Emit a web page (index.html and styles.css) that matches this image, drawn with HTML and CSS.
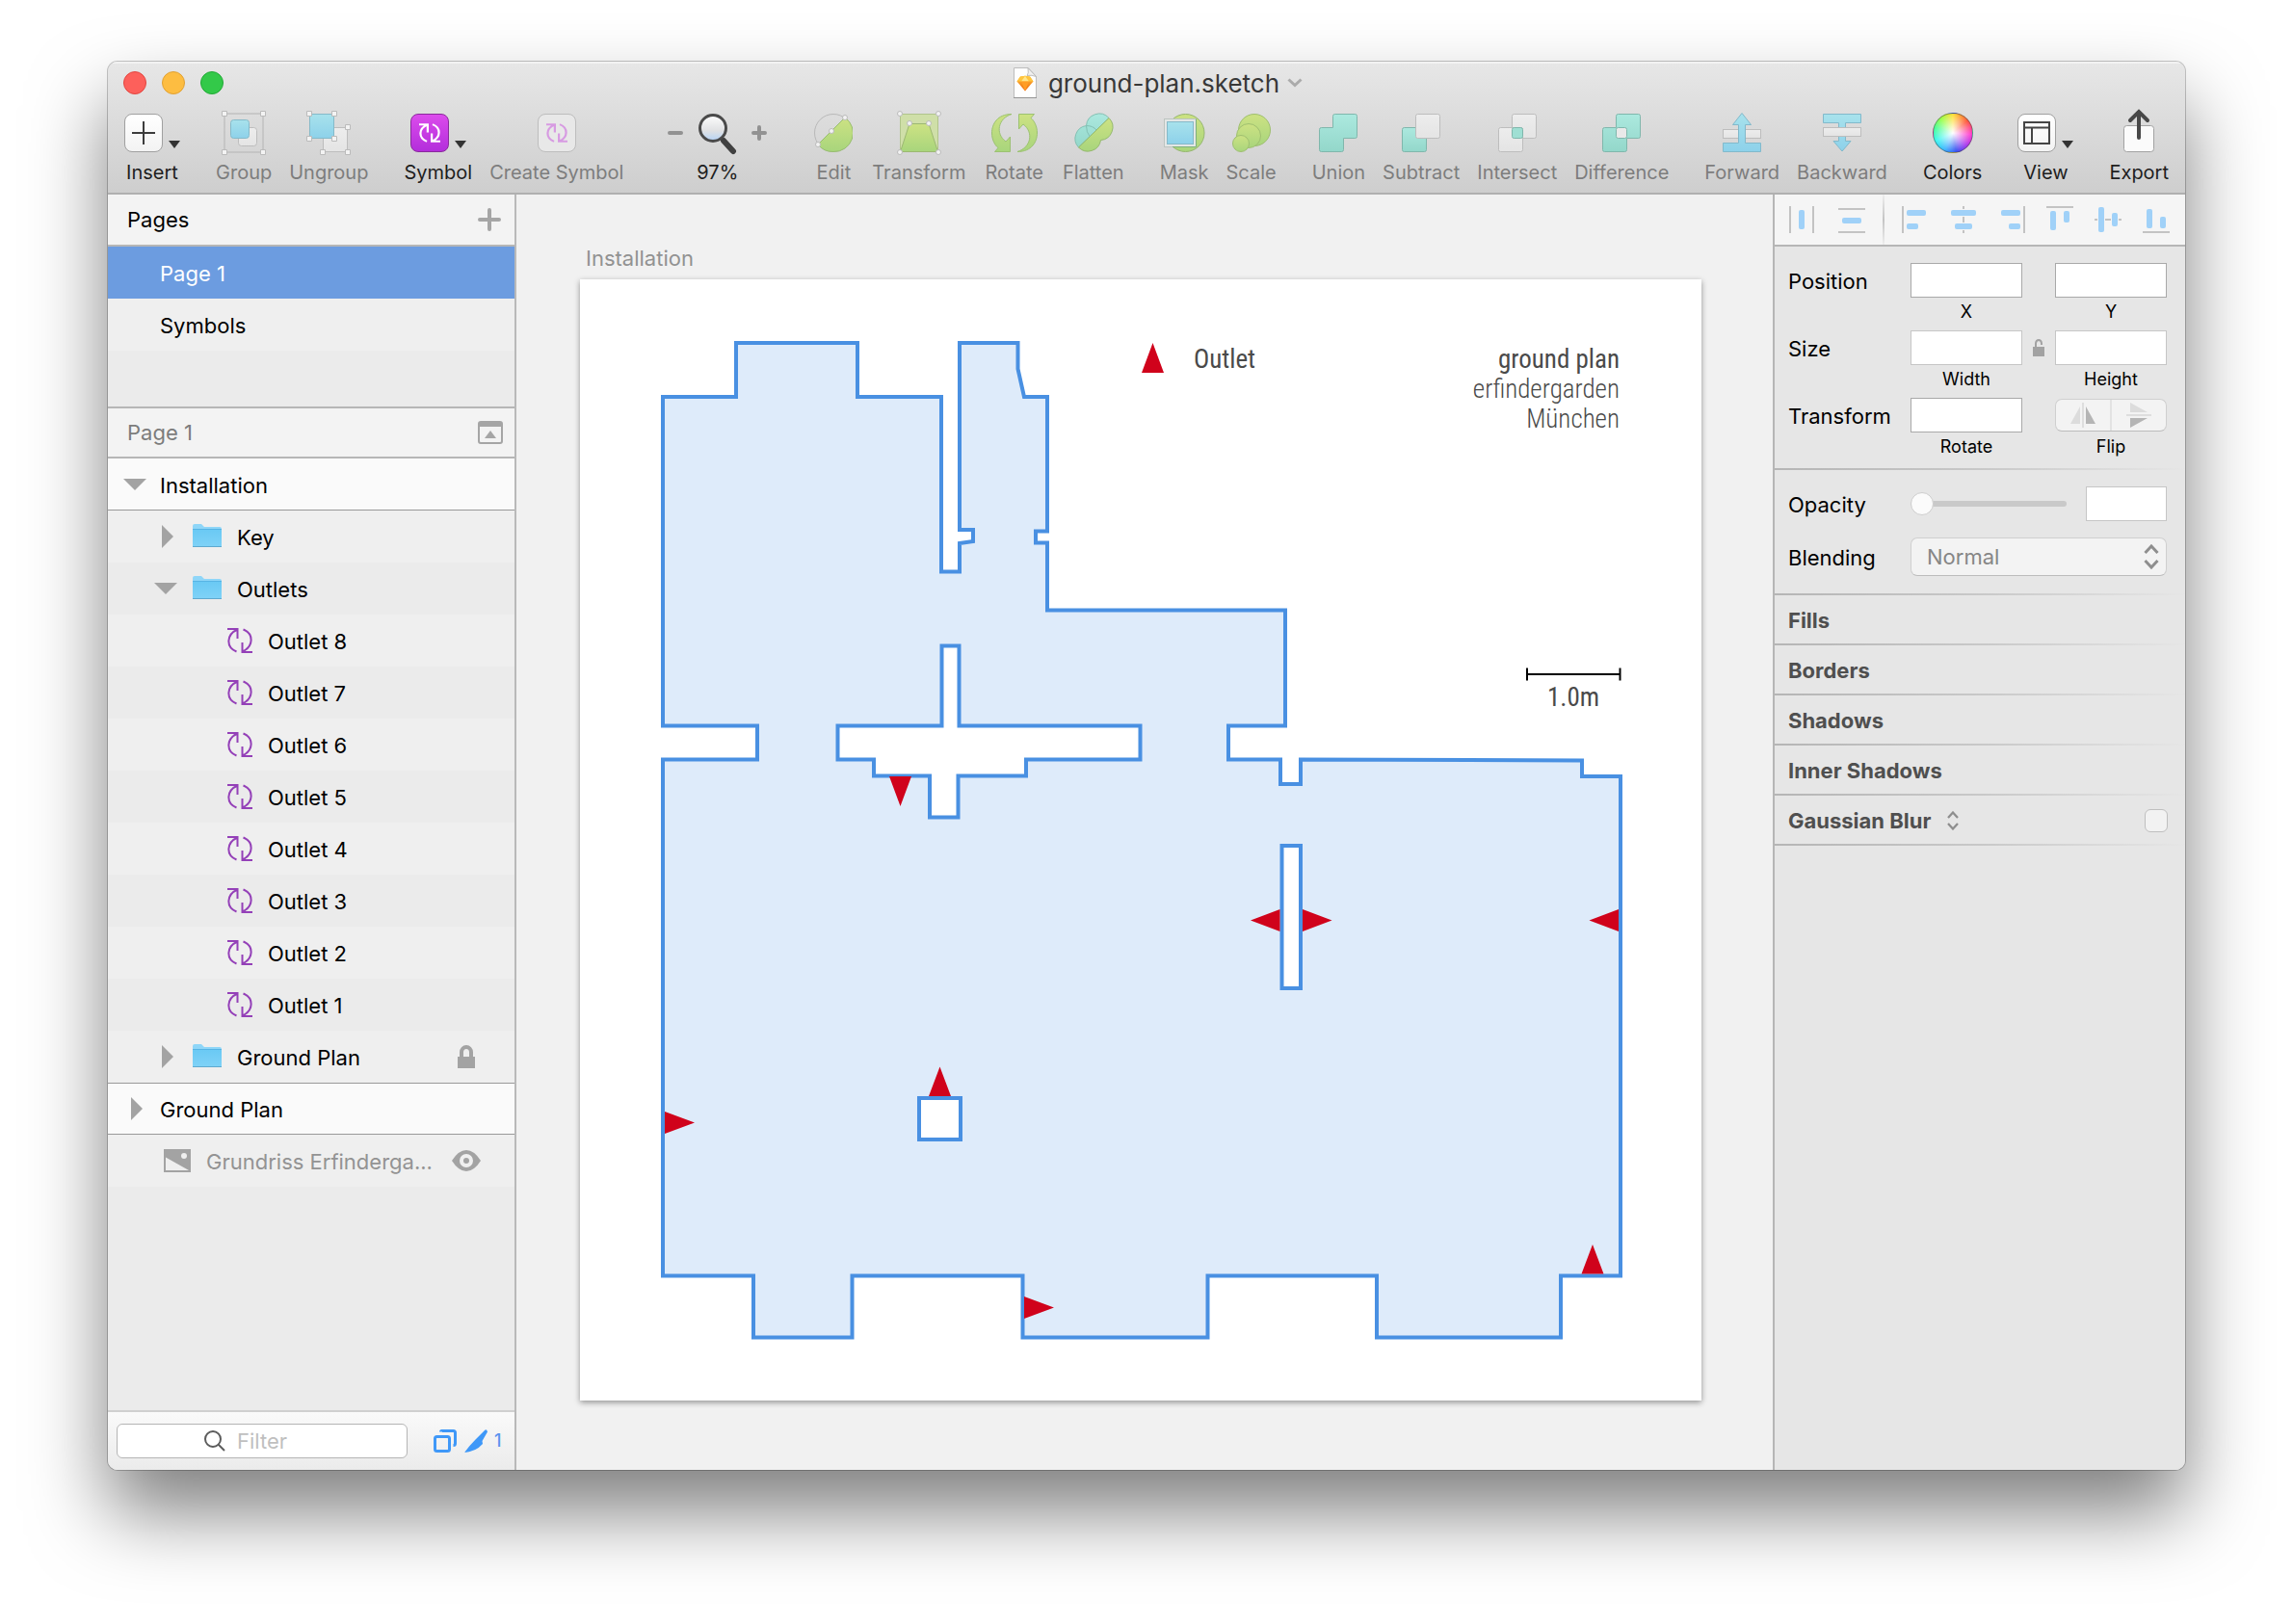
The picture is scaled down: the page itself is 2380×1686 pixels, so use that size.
FILE: index.html
```html
<!DOCTYPE html>
<html lang="en">
<head>
<meta charset="utf-8">
<title>ground-plan.sketch</title>
<link rel="stylesheet" href="styles.css">
</head>
<body>
<svg class="defs" width="0" height="0" aria-hidden="true">
  <defs>
    <linearGradient id="blue" x1="0" y1="0" x2="0" y2="1"><stop offset="0" stop-color="#a8e2ec"/><stop offset="1" stop-color="#8dd1ea"/></linearGradient>
    <linearGradient id="green" x1="0" y1="0" x2="0" y2="1"><stop offset="0" stop-color="#cde283"/><stop offset="1" stop-color="#a8d57c"/></linearGradient>
    <linearGradient id="teal" x1="0" y1="0" x2="0" y2="1"><stop offset="0" stop-color="#ace9df"/><stop offset="1" stop-color="#93d7ca"/></linearGradient>
    <linearGradient id="pale" x1="0" y1="0" x2="0" y2="1"><stop offset="0" stop-color="#ededed"/><stop offset="1" stop-color="#e4e4e4"/></linearGradient>
    <linearGradient id="glass" x1="0" y1="0" x2="0" y2="1"><stop offset="0" stop-color="#fdfdfd"/><stop offset=".6" stop-color="#e0e1e3"/><stop offset="1" stop-color="#b4d2f6"/></linearGradient>
    <linearGradient id="gem" x1="0" y1="0" x2="0" y2="1"><stop offset="0" stop-color="#fdc23a"/><stop offset="1" stop-color="#f0660c"/></linearGradient>
    <linearGradient id="folderfill" x1="0" y1="0" x2="0" y2="1"><stop offset="0" stop-color="#69c9f4"/><stop offset="1" stop-color="#7fd2f7"/></linearGradient>
    <symbol id="cycle" viewBox="0 0 26 26"><path d="M0 1h10.5v10M10.5 1.500C-1.500 7-1.500 20 9.500 24.500M26 25H15.500V15M15.500 24.500C27.500 19 27.500 6 16.500 1.500" fill="none" stroke="currentColor" stroke-width="2"/></symbol>
    <symbol id="folder" viewBox="0 0 30 26"><path d="M0 24V2q0-2 2-2h7l3 3h16q2 0 2 2v19z" fill="#8fd6f8"/><path d="M0 5h30v18.500H0z" fill="url(#folderfill)"/><path d="M0 5.500h30" stroke="#58b4e4"/><path d="M0 23.500h30" stroke="#5fa9cf"/></symbol>
    <symbol id="down" viewBox="0 0 24 24"><path d="M0 6h24L12 18z" fill="#a3a3a3"/></symbol>
    <symbol id="right" viewBox="0 0 24 24"><path d="M8 0v24l12-12z" fill="#a3a3a3"/></symbol>
    <symbol id="updown" viewBox="0 0 16 26"><path d="M1.500 9L8 2l6.500 7M1.500 17L8 24l6.500-7" fill="none" stroke="#8e8e8e" stroke-width="3"/></symbol>
  </defs>
</svg>

<div class="window">
  <header class="chrome">
    <div class="titlebar">
      <div class="lights">
        <button class="light close" aria-label="Close"></button>
        <button class="light minimize" aria-label="Minimize"></button>
        <button class="light zoom-window" aria-label="Zoom window"></button>
      </div>
      <h1 class="title">
        <svg width="24" height="32" viewBox="0 0 24 32" aria-hidden="true"><path d="M.5.5H15l8.500 9v22H.5z" fill="#fefefe" stroke="#bcbcbc"/><path d="M15 .5q1 6-1 8 5-1 9.500 1z" fill="#f0f0f0" stroke="#b0b0b0" stroke-width=".8"/><path d="M0 31.500h24" stroke="#949494"/><path d="M7 9.500l5-.7 5 .7 3.500 5L12 24.500l-8.500-10z" fill="url(#gem)"/><path d="M3.500 14.500h17L17 9.500l-5-.7-5 .7z" fill="#ffc53d"/><path d="M8 14.500l4-5.500 4 5.500z" fill="#ffe58a"/><path d="M8 14.500h8l-4 10z" fill="#ff9d25"/></svg>
        <span>ground-plan.sketch</span>
      </h1>
      <button class="title-menu" aria-label="Document menu"><svg width="16" height="10" viewBox="0 0 16 10"><path d="M1.500 1.500L8 7.500l6.500-6" fill="none" stroke="#ababab" stroke-width="3"/></svg></button>
    </div>

    <div class="toolbar" role="toolbar" aria-label="Tools">
      <div class="tools">
        <button class="tool">
          <span class="glyph"><span class="tile"><svg width="24" height="24" viewBox="0 0 24 24"><path d="M0 12h24M12 0v24" stroke="#3c3c3c" stroke-width="2"/></svg></span><span class="caret"></span></span>
          <span class="name">Insert</span>
        </button>
      </div>
      <div class="tools">
        <button class="tool off">
          <svg class="icon" viewBox="0 0 48 52"><rect x="4" y="6" width="40" height="40" fill="none" stroke="#b4b4b4"/><rect x="18.500" y="20.500" width="19" height="19" rx="3" fill="url(#pale)" stroke="#bdbdbd"/><rect x="10.500" y="12.500" width="19" height="19" rx="3" fill="url(#blue)" stroke="#85bac9"/><g fill="#f3f3f3" stroke="#bbb"><path d="M1.500 3.500h5v5h-5zM41.500 3.500h5v5h-5zM1.500 43.500h5v5h-5zM41.500 43.500h5v5h-5z"/></g></svg>
          <span class="name">Group</span>
        </button>
        <button class="tool off">
          <svg class="icon" viewBox="0 0 48 52"><rect x="18.500" y="20.500" width="25" height="25" fill="url(#pale)" stroke="#bdbdbd"/><rect x="4.500" y="6.500" width="25" height="25" fill="url(#blue)" stroke="#85bac9"/><g fill="#f3f3f3" stroke="#bbb"><path d="M1.500 3.500h5v5h-5zM27.500 3.500h5v5h-5zM1.500 29.500h5v5h-5zM27.500 29.500h5v5h-5zM41.500 17.500h5v5h-5zM15.500 43.500h5v5h-5zM41.500 43.500h5v5h-5z"/></g></svg>
          <span class="name">Ungroup</span>
        </button>
      </div>
      <div class="tools">
        <button class="tool">
          <span class="glyph"><span class="tile purple"><svg width="22" height="20" viewBox="0 0 26 26" preserveAspectRatio="none"><path d="M0 1.500h10.500v11M10 2C-1 7-1 20 9.500 24.500M26 24.500H15.500v-11M16 24C27 19 27 6 16.500 1.500" fill="none" stroke="#fff" stroke-width="2.600"/></svg></span><span class="caret"></span></span>
          <span class="name">Symbol</span>
        </button>
        <button class="tool off">
          <span class="glyph"><span class="tile faded"><svg width="22" height="20" viewBox="0 0 26 26" preserveAspectRatio="none"><path d="M0 1.500h10.500v11M10 2C-1 7-1 20 9.500 24.500M26 24.500H15.500v-11M16 24C27 19 27 6 16.500 1.500" fill="none" stroke="#d79be2" stroke-width="2.600"/></svg></span></span>
          <span class="name">Create Symbol</span>
        </button>
      </div>
      <div class="tools zoomer">
        <button class="step" aria-label="Zoom out"><svg width="16" height="16" viewBox="0 0 16 16"><path d="M2 8h12" stroke="#929292" stroke-width="4" stroke-linecap="round"/></svg></button>
        <button class="tool">
          <svg class="icon slim" viewBox="0 0 40 52"><path d="M26 34l10 11" stroke="#404040" stroke-width="6" stroke-linecap="round"/><circle cx="15" cy="21" r="13.500" fill="url(#glass)" stroke="#4a4a4a" stroke-width="3"/></svg>
          <span class="name">97%</span>
        </button>
        <button class="step" aria-label="Zoom in"><svg width="16" height="16" viewBox="0 0 16 16"><path d="M2 8h12M8 2v12" stroke="#929292" stroke-width="4" stroke-linecap="round"/></svg></button>
      </div>
      <div class="tools shaping">
        <button class="tool off">
          <svg class="icon slim" viewBox="4 0 40 52"><circle cx="24" cy="26" r="19.500" fill="none" stroke="#b8b8b8"/><path d="M8 38L36 10A19.500 19.500 0 0 1 24 45.500 19.500 19.500 0 0 1 8 38z" fill="url(#green)" stroke="#98bd70"/><g fill="#f3f3f3" stroke="#bbb"><circle cx="8" cy="38" r="2.500"/><circle cx="22" cy="24" r="2.500"/><circle cx="36" cy="10" r="2.500"/></g></svg>
          <span class="name">Edit</span>
        </button>
        <button class="tool off">
          <svg class="icon" viewBox="0 0 48 52"><rect x="4.500" y="6.500" width="39" height="39" fill="#cfdfa8" stroke="#b1c58c"/><path d="M14 16.500h20l9.500 29h-39z" fill="url(#green)" stroke="#9cb872"/><g fill="#f3f3f3" stroke="#bbb"><circle cx="4" cy="6" r="2.500"/><circle cx="44" cy="6" r="2.500"/><circle cx="4" cy="46" r="2.500"/><circle cx="44" cy="46" r="2.500"/><circle cx="14" cy="16" r="2.500"/><circle cx="34" cy="16" r="2.500"/></g></svg>
          <span class="name">Transform</span>
        </button>
        <button class="tool off">
          <svg class="icon" viewBox="0 0 48 52"><path d="M21 6.500C6 6.500.5 17 .5 26c0 7 3 12.500 6.500 15.500l-3.500 4h16V30l-4.500 5C4 27 6.500 11 21 6.500z" fill="url(#green)" stroke="#9cc172"/><path d="M27 45.500C42 45.500 47.500 35 47.500 26c0-7-3-12.500-6.500-15.500l3.500-4h-16V22l4.500-5c11 8 8.500 24-6 28.500z" fill="url(#green)" stroke="#9cc172"/></svg>
          <span class="name">Rotate</span>
        </button>
        <button class="tool off">
          <svg class="icon" viewBox="0 0 48 52"><path d="M8.500 41A13.500 13.500 0 0 1 16.500 18.500 13.500 13.500 0 0 1 40 10.500z" fill="url(#teal)" stroke="#83c0b3"/><path d="M8.500 41L40 10.500A13.500 13.500 0 0 1 31.500 33.500 13.500 13.500 0 0 1 8.500 41z" fill="url(#green)" stroke="#95b96e"/><path d="M16.500 18.500q0 7 3.500 11M16.500 18.500q7 0 10.500 4.500" fill="none" stroke="#83c0b3"/></svg>
          <span class="name">Flatten</span>
        </button>
      </div>
      <div class="tools">
        <button class="tool off">
          <svg class="icon" viewBox="0 0 48 52"><circle cx="25.500" cy="26" r="19.500" fill="url(#green)" stroke="#96b670"/><rect x="3.500" y="11.500" width="33" height="29" fill="#e4e7e6" stroke="#bcc4c0"/><path d="M36.500 11.500v29H12" fill="none" stroke="#7fb07f"/><rect x="6.500" y="14.500" width="27" height="23" fill="url(#blue)" stroke="#86b9c9"/></svg>
          <span class="name">Mask</span>
        </button>
        <button class="tool off">
          <svg class="icon" viewBox="0 0 48 52"><g fill="url(#green)" stroke="#9fbf70"><circle cx="27" cy="23" r="16.500"/><circle cx="21" cy="29" r="12.500"/><circle cx="13" cy="37" r="8.500"/></g></svg>
          <span class="name">Scale</span>
        </button>
      </div>
      <div class="tools">
        <button class="tool off">
          <svg class="icon" viewBox="0 0 48 52"><path d="M20.500 6.500h21q2 0 2 2v21q0 2-2 2h-12v12q0 2-2 2h-21q-2 0-2-2v-21q0-2 2-2h12v-12q0-2 2-2z" fill="url(#teal)" stroke="#80b7ac"/></svg>
          <span class="name">Union</span>
        </button>
        <button class="tool off">
          <svg class="icon" viewBox="0 0 48 52"><rect x="4.500" y="20.500" width="25" height="25" rx="2" fill="url(#teal)" stroke="#80b7ac"/><rect x="18.500" y="6.500" width="25" height="25" rx="2" fill="url(#pale)" stroke="#bdbdbd"/></svg>
          <span class="name">Subtract</span>
        </button>
        <button class="tool off">
          <svg class="icon" viewBox="0 0 48 52"><rect x="18.500" y="6.500" width="25" height="25" rx="2" fill="url(#pale)" stroke="#bdbdbd"/><rect x="4.500" y="20.500" width="25" height="25" rx="2" fill="url(#pale)" stroke="#bdbdbd"/><rect x="18.500" y="20.500" width="11" height="11" rx="2" fill="#9fdfd3" stroke="#80b7ac"/></svg>
          <span class="name">Intersect</span>
        </button>
        <button class="tool off">
          <svg class="icon" viewBox="0 0 48 52"><path d="M20.500 6.500h21q2 0 2 2v21q0 2-2 2h-12v12q0 2-2 2h-21q-2 0-2-2v-21q0-2 2-2h12v-12q0-2 2-2z" fill="url(#teal)" stroke="#80b7ac"/><rect x="18.500" y="20.500" width="11" height="11" rx="2" fill="#e9e9e9" stroke="#80b7ac"/></svg>
          <span class="name">Difference</span>
        </button>
      </div>
      <div class="tools">
        <button class="tool off">
          <svg class="icon" viewBox="0 0 48 52"><rect x="4.500" y="22.500" width="39" height="9" fill="url(#pale)" stroke="#bdbdbd"/><path d="M24 5.500l9.500 12h-6v19h16v9h-39v-9h16v-19h-6z" fill="url(#blue)" stroke="#82b9cb"/></svg>
          <span class="name">Forward</span>
        </button>
        <button class="tool off">
          <svg class="icon" viewBox="0 0 48 52"><path d="M4.500 6.500h39v9h-16v19h5.500L24 45l-9-10.500h5.500v-19h-16z" fill="url(#blue)" stroke="#82b9cb"/><rect x="4.500" y="20.500" width="39" height="9" fill="url(#pale)" stroke="#bdbdbd"/></svg>
          <span class="name">Backward</span>
        </button>
      </div>
      <div class="tools">
        <button class="tool">
          <span class="glyph"><span class="wheel"></span></span>
          <span class="name">Colors</span>
        </button>
      </div>
      <div class="tools">
        <button class="tool">
          <span class="glyph"><span class="tile"><svg width="28" height="24" viewBox="0 0 28 24"><path d="M1 1h26v22H1zM1 6.500h26M9 6.500V23" fill="none" stroke="#454545" stroke-width="2"/></svg></span><span class="caret"></span></span>
          <span class="name">View</span>
        </button>
      </div>
      <div class="tools">
        <button class="tool">
          <svg class="icon" viewBox="0 0 48 52"><rect x="8.500" y="18.500" width="31" height="27" rx="3" fill="#fbfbfb" stroke="#a2a2a2"/><path d="M24 31V5M15 13l9-9 9 9" fill="none" stroke="#484848" stroke-width="4" stroke-linecap="round"/></svg>
          <span class="name">Export</span>
        </button>
      </div>
    </div>
  </header>

  <div class="body">
    <aside class="layers">
      <div class="bar">
        <h2>Pages</h2>
        <button class="plain" aria-label="Add page"><svg width="24" height="24" viewBox="0 0 24 24"><path d="M2 12h20M12 2v20" stroke="#a5a5a5" stroke-width="4" stroke-linecap="round"/></svg></button>
      </div>
      <ul class="pages">
        <li class="row page selected"><span class="label">Page 1</span></li>
        <li class="row page"><span class="label">Symbols</span></li>
      </ul>
      <div class="bar current">
        <h2>Page 1</h2>
        <button class="plain" aria-label="Collapse layers"><svg width="26" height="24" viewBox="0 0 26 24"><rect x="1" y="1" width="24" height="22" rx="2" fill="none" stroke="#a5a5a5" stroke-width="2"/><path d="M1 1h24v5H1zM7 18l6-8 6 8z" fill="#a5a5a5"/></svg></button>
      </div>
      <ul class="tree">
        <li class="row artboard-row"><svg class="twisty"><use href="#down"/></svg><span class="label">Installation</span></li>
        <li class="row level1"><svg class="twisty"><use href="#right"/></svg><svg class="folder"><use href="#folder"/></svg><span class="label">Key</span></li>
        <li class="row level1"><svg class="twisty"><use href="#down"/></svg><svg class="folder"><use href="#folder"/></svg><span class="label">Outlets</span></li>
        <li class="row level2"><svg class="cycle"><use href="#cycle"/></svg><span class="label">Outlet 8</span></li>
        <li class="row level2"><svg class="cycle"><use href="#cycle"/></svg><span class="label">Outlet 7</span></li>
        <li class="row level2"><svg class="cycle"><use href="#cycle"/></svg><span class="label">Outlet 6</span></li>
        <li class="row level2"><svg class="cycle"><use href="#cycle"/></svg><span class="label">Outlet 5</span></li>
        <li class="row level2"><svg class="cycle"><use href="#cycle"/></svg><span class="label">Outlet 4</span></li>
        <li class="row level2"><svg class="cycle"><use href="#cycle"/></svg><span class="label">Outlet 3</span></li>
        <li class="row level2"><svg class="cycle"><use href="#cycle"/></svg><span class="label">Outlet 2</span></li>
        <li class="row level2"><svg class="cycle"><use href="#cycle"/></svg><span class="label">Outlet 1</span></li>
        <li class="row level1"><svg class="twisty"><use href="#right"/></svg><svg class="folder"><use href="#folder"/></svg><span class="label">Ground Plan</span><svg class="state" viewBox="0 0 30 24"><path d="M10 12V7.500a5 5.500 0 0 1 10 0V12" fill="none" stroke="#a3a3a3" stroke-width="4"/><path d="M6 12h18v12H6z" fill="#a3a3a3"/></svg></li>
        <li class="row artboard-row ruled"><svg class="twisty"><use href="#right"/></svg><span class="label">Ground Plan</span></li>
        <li class="row image-row"><svg class="picture" viewBox="0 0 28 24"><path d="M0 0h28v24H0zM2 8.500V22h24z" fill="#a3a3a3" fill-rule="evenodd"/><circle cx="21" cy="7" r="3" fill="#efefef"/></svg><span class="label">Grundriss Erfinderga...</span><svg class="state" viewBox="0 0 30 24"><path d="M0 12Q7 1 15 1t15 11q-7 11-15 11T0 12z" fill="#a3a3a3"/><circle cx="15" cy="12" r="5" fill="#a3a3a3" stroke="#f0f0f0" stroke-width="4"/></svg></li>
      </ul>
      <footer class="filterbar">
        <label class="filter">
          <svg width="22" height="22" viewBox="0 0 22 22"><circle cx="9" cy="9" r="8" fill="none" stroke="#5c5c5c" stroke-width="2"/><path d="M14.500 14.500L21 21" stroke="#5c5c5c" stroke-width="2"/></svg>
          <input type="text" placeholder="Filter" aria-label="Filter layers">
        </label>
        <button class="plain" aria-label="Show only copies"><svg width="24" height="24" viewBox="0 0 24 24"><rect x="1.500" y="7.500" width="15" height="15" rx="2" fill="none" stroke="#3f98f8" stroke-width="3"/><path d="M7.500 2.500q0-1 1-1h12q2 0 2 2v11q0 2-2 2" fill="none" stroke="#3f98f8" stroke-width="3"/></svg></button>
        <button class="plain slices"><svg width="24" height="24" viewBox="0 0 24 24"><path d="M21 1Q23-1 24 2.500L18.500 12l.5 3Q12 23 0 24q5-7 12-14z" fill="#3f98f8"/></svg>1</button>
      </footer>
    </aside>

    <main class="canvas">
      <h2 class="artboard-name">Installation</h2>
      <svg class="artboard" viewBox="602 290 1164 1164" role="img" aria-label="Ground plan of erfindergarden">
        <path class="plan" fill-rule="evenodd" d="M688 412H764V356H890V412H977V593.500H996V564L1010 562V550H996V356H1056.500V383L1063 412H1087V551.500H1075V563.500H1087V633.500H1334V753.500H1275V788.500H1329V814H1350V788.500L1642 789.500V806H1682V1324.500H1620V1388.500H1429V1324.500H1253.500V1388.500H1061.500V1324.500H884.500V1388.500H782V1324.500H688V788.500H786V753.500H688Z
          M869.500 753.500H977.500V670.500H995.500V753.500H1183.500V788.500H1065V805.500H994.500V848.500H965V805.500H907V788.500H869.500Z
          M1330.500 878H1350V1026H1330.500Z
          M954 1140H997V1183H954Z"/>
        <path class="outlet" d="M1196.500 356l11.500 31h-23zM934.500 837L923 806h23zM721 1165.500L690 1154v23zM975.500 1107.500L987 1138h-23zM1094 1357.500L1063 1346v23zM1653 1292l11.500 30.500h-23zM1298 955.500l30.500-11.500v23zM1382.500 955.500L1352 944v23zM1649.500 955.500l30.500-11.500v23z"/>
        <path class="scale-bar" d="M1585 700h96.500M1585 693.500v13M1681.500 693.500v13"/>
        <text class="note" x="1239" y="382">Outlet</text>
        <text class="note end" x="1681" y="382">ground plan</text>
        <text class="note thin end" x="1681" y="413">erfindergarden</text>
        <text class="note thin end" x="1681" y="444">München</text>
        <text class="note mid" x="1633" y="733">1.0m</text>
      </svg>
    </main>

    <aside class="inspector">
      <div class="align">
        <div class="distribute">
          <button class="plain" aria-label="Distribute horizontally"><svg width="28" height="28"><path class="guide" d="M2 0v28M26 0v28"/><rect x="11" y="4" width="6" height="20" rx="2"/></svg></button>
          <button class="plain" aria-label="Distribute vertically"><svg width="28" height="28"><path class="guide" d="M0 3h28M0 27h28"/><rect x="4" y="12" width="20" height="6" rx="2"/></svg></button>
        </div>
        <span class="split"></span>
        <div class="edges">
          <button class="plain" aria-label="Align left"><svg width="28" height="28"><path class="guide" d="M1 0v28"/><rect x="5" y="4" width="20" height="6" rx="2"/><rect x="5" y="18" width="12" height="6" rx="2"/></svg></button>
          <button class="plain" aria-label="Align center"><svg width="28" height="28"><path class="guide" d="M14 0v3M14 11v6M14 25v3"/><rect x="1" y="4" width="26" height="6" rx="2"/><rect x="5" y="18" width="18" height="6" rx="2"/></svg></button>
          <button class="plain" aria-label="Align right"><svg width="28" height="28"><path class="guide" d="M27 0v28"/><rect x="3" y="4" width="20" height="6" rx="2"/><rect x="11" y="18" width="12" height="6" rx="2"/></svg></button>
          <button class="plain" aria-label="Align top"><svg width="28" height="28"><path class="guide" d="M0 1h28"/><rect x="4" y="5" width="6" height="20" rx="2"/><rect x="18" y="5" width="6" height="12" rx="2"/></svg></button>
          <button class="plain" aria-label="Align middle"><svg width="28" height="28"><path class="guide" d="M0 14h3M11 14h6M25 14h3"/><rect x="4" y="1" width="6" height="26" rx="2"/><rect x="18" y="7" width="6" height="14" rx="2"/></svg></button>
          <button class="plain" aria-label="Align bottom"><svg width="28" height="28"><path class="guide" d="M0 27h28"/><rect x="4" y="3" width="6" height="20" rx="2"/><rect x="18" y="11" width="6" height="12" rx="2"/></svg></button>
        </div>
      </div>

      <section class="geometry">
        <span class="heading">Position</span>
        <input class="field a" id="x" type="text">
        <input class="field b" id="y" type="text">
        <label class="caption a" for="x">X</label>
        <label class="caption b" for="y">Y</label>

        <span class="heading">Size</span>
        <input class="field soft a" id="w" type="text">
        <button class="plain lock" aria-label="Lock proportions"><svg width="12" height="18" viewBox="0 0 12 18"><path d="M3 8V4.500a3 3.500 0 0 1 6 0V6" fill="none" stroke="#a2a2a2" stroke-width="2"/><path d="M0 8h12v10H0z" fill="#a2a2a2"/></svg></button>
        <input class="field soft b" id="h" type="text">
        <label class="caption a" for="w">Width</label>
        <label class="caption b" for="h">Height</label>

        <span class="heading">Transform</span>
        <input class="field a" id="r" type="text">
        <div class="flip b" role="group" aria-labelledby="flip">
          <button class="plain" aria-label="Flip horizontal"><svg width="26" height="26" viewBox="0 0 26 26"><path d="M10 4v18H0z" fill="#dcdcdc"/><path d="M16 4v18h10z" fill="#b5b5b5"/><path d="M13 0v26" stroke="#dedede" stroke-width="2"/></svg></button>
          <button class="plain" aria-label="Flip vertical"><svg width="26" height="26" viewBox="0 0 26 26"><path d="M4 0v10h18z" fill="#dcdcdc"/><path d="M4 26V16h18z" fill="#b5b5b5"/><path d="M0 13h26" stroke="#dedede" stroke-width="2"/></svg></button>
        </div>
        <label class="caption a" for="r">Rotate</label>
        <span class="caption b" id="flip">Flip</span>
      </section>

      <section class="style">
        <label class="heading" for="opacity">Opacity</label>
        <input class="slider" id="opacity" type="range" min="0" max="100" value="0">
        <input class="field soft percent" type="text" aria-label="Opacity value">
        <label class="heading" for="blending">Blending</label>
        <div class="dropdown">
          <select id="blending"><option>Normal</option></select>
          <svg class="arrows" width="16" height="26"><use href="#updown"/></svg>
        </div>
      </section>

      <button class="section">Fills</button>
      <button class="section">Borders</button>
      <button class="section">Shadows</button>
      <button class="section">Inner Shadows</button>
      <div class="section">
        <label for="blur">Gaussian Blur</label>
        <svg class="mini" width="12" height="20"><use href="#updown"/></svg>
        <input class="check" id="blur" type="checkbox">
      </div>
    </aside>
  </div>
</div>
</body>
</html>
```
FILE: styles.css
```css
* { box-sizing: border-box; }

body {
  margin: 0;
  min-height: 100vh;
  padding: 64px 112px 160px;
  display: flex;
  background: #fff;
  color: #000;
  font: 22px/28px Inter, "Liberation Sans", sans-serif;
}

h1, h2, ul { margin: 0; padding: 0; font: inherit; list-style: none; }
svg { display: block; flex: none; }
.defs { position: absolute; }

button, input, select {
  margin: 0;
  padding: 0;
  border: 0;
  background: none;
  color: inherit;
  font: inherit;
}

.window {
  flex: 1;
  min-width: 0;
  display: flex;
  flex-direction: column;
  overflow: hidden;
  border-radius: 10px;
  background: #ebebeb;
  box-shadow: 0 0 0 1px rgba(0, 0, 0, .22), 0 44px 80px rgba(0, 0, 0, .5);
}

/* Title bar and toolbar */
.chrome {
  flex: none;
  height: 138px;
  border-bottom: 2px solid #b0b0b0;
  background: linear-gradient(#e7e7e7, #cecece);
  box-shadow: inset 0 2px #f2f2f2;
}

.titlebar {
  display: grid;
  grid-template-columns: 1fr auto 1fr;
  align-items: center;
  height: 44px;
  padding: 0 16px;
}

.lights { display: flex; gap: 16px; }
.light { width: 24px; height: 24px; border-radius: 50%; border: 1px solid #e2453f; background: #fd605b; }
.minimize { border-color: #e0a033; background: #fdbd41; }
.zoom-window { border-color: #22a936; background: #33c949; }

.title { display: flex; align-items: center; gap: 12px; color: #383838; font-size: 26px; }
.title span { padding-top: 2px; }
.title-menu { padding-left: 8px; justify-self: start; }

.toolbar {
  display: flex;
  justify-content: space-between;
  padding: 4px 17px 0;
}

.tools { display: flex; gap: 18px; }
.tools.shaping { gap: 20px; }

.tool {
  display: flex;
  flex-direction: column;
  align-items: center;
  color: #1e1e1e;
  font-size: 20px;
  line-height: 30px;
  white-space: nowrap;
}

.tool.off { color: #7d7d7d; }
.icon { width: 48px; height: 52px; }
.icon.slim { width: 40px; }
.glyph { display: flex; align-items: center; gap: 6px; height: 52px; }

.tile {
  display: grid;
  place-items: center;
  width: 40px;
  height: 40px;
  border: 1px solid #a0a0a0;
  border-radius: 8px;
  background: linear-gradient(#fff, #f3f3f3);
}

.tile.purple { border-color: #8a2a9c; background: linear-gradient(#dc4cec, #b32edb); }
.tile.faded { border-color: #bdbdbd; background: #e8e8e8; }

.caret {
  margin-top: 24px;
  border: 6px solid transparent;
  border-top: 8px solid #333;
  border-bottom: 0;
}

.wheel {
  width: 42px;
  height: 42px;
  border: 1px solid rgba(60, 60, 60, .5);
  border-radius: 50%;
  background:
    radial-gradient(circle, #fff, rgba(255, 255, 255, 0) 68%),
    conic-gradient(#ffe03a, #ff5a3c 50deg, #ff3fd0 95deg, #a23cf0 135deg, #3a55f0 170deg, #3fb4ff 205deg, #3ff5f0 245deg, #4dff9a 285deg, #9aff4a 320deg, #ffe03a);
}

.zoomer { gap: 14px; padding: 0 12px 0 9px; }
.step { height: 52px; }

/* Columns */
.body { flex: 1; display: flex; min-height: 0; }

.layers {
  flex: none;
  width: 424px;
  display: flex;
  flex-direction: column;
  border-right: 2px solid #b9b9b9;
}

.bar {
  display: flex;
  align-items: center;
  justify-content: space-between;
  height: 54px;
  padding: 0 14px 0 20px;
  border-bottom: 2px solid #b6b6b6;
  background: #f3f3f3;
}

.bar.current { height: 52px; padding-right: 12px; color: #7c7c7c; }
.pages { height: 168px; border-bottom: 2px solid #b6b6b6; }

.row { display: flex; align-items: center; gap: 16px; height: 54px; padding-right: 35px; }
.row:nth-child(even) { background: #efefef; }
.row.page { padding-left: 54px; }
.row.selected { background: #6c9ce0; color: #fff; }

.tree { flex: 1; }
.row.artboard-row { gap: 14px; padding-left: 16px; border-bottom: 1px solid #999; background: #fafafa; }
.row.ruled { border-top: 1px solid #999; }
.level1 { padding-left: 48px; }
.level2 { padding-left: 124px; }
.image-row { padding-left: 58px; color: #939393; }
.label { flex: 1; min-width: 0; padding-top: 2px; white-space: nowrap; }
.twisty { width: 24px; height: 24px; }
.folder { width: 30px; height: 26px; }
.cycle { width: 26px; height: 26px; color: #9440b8; }
.picture { width: 28px; height: 24px; }
.state { width: 30px; height: 24px; }

.filterbar {
  display: flex;
  align-items: center;
  height: 62px;
  padding: 0 14px 0 9px;
  border-top: 2px solid #d0d0d0;
  background: linear-gradient(#fafafa, #ebebeb);
}

.filter {
  display: flex;
  align-items: center;
  gap: 12px;
  width: 302px;
  height: 36px;
  margin-right: 27px;
  padding-left: 90px;
  border: 1px solid #b5b5b5;
  border-radius: 6px;
  background: #fff;
}

.filter input { flex: 1; min-width: 0; }
.filter input::placeholder { color: #bfbfbf; }
.slices { display: flex; align-items: center; gap: 7px; margin-left: 8px; color: #5b93ee; font-size: 18px; font-weight: 500; }

.canvas { flex: 1; min-width: 0; padding: 52px 74px 0 66px; background: #f1f1f1; }
.artboard-name { margin-bottom: 8px; padding-left: 6px; color: #929292; }
.artboard { width: 100%; height: auto; background: #fff; box-shadow: 0 2px 6px rgba(0, 0, 0, .4); }
.plan { fill: #deebfa; stroke: #4990e2; stroke-width: 4; }
.outlet { fill: #d0021b; }
.scale-bar { fill: none; stroke: #000; stroke-width: 2; }
.note { fill: #4a4a4a; font-family: "Roboto Condensed", Roboto, sans-serif; font-size: 27px; }
.thin { font-weight: 300; }
.end { text-anchor: end; }
.mid { text-anchor: middle; }

/* Inspector */
.inspector {
  flex: none;
  width: 428px;
  border-left: 2px solid #b6b6b6;
  background: #e6e6e6;
}

.align {
  display: flex;
  align-items: center;
  height: 54px;
  padding: 0 16px 0 14px;
  border-bottom: 2px solid #b6b6b6;
  background: #f5f5f5;
  fill: #a0d1f8;
}

.distribute { display: flex; gap: 24px; }
.edges { flex: 1; display: flex; justify-content: space-between; }
.guide { fill: none; stroke: #c3c3c3; stroke-width: 2; }
.split { width: 2px; height: 52px; margin: 0 18px; background: linear-gradient(#eee, #c4c4c4, #eee); }

.geometry, .style, .section {
  border-bottom: 2px solid;
  border-image: linear-gradient(90deg, #b5b5b5, #c8c8c8 50%, #e6e6e6) 1;
}

.geometry {
  display: grid;
  grid-template-columns: 127px 116px 34px 116px;
  grid-auto-rows: 36px 34px;
  padding: 17px 19px 3px 14px;
}

.heading { grid-column: 1; align-self: center; padding-top: 2px; }
.a { grid-column: 2; }
.b { grid-column: 4; }
.lock { grid-column: 3; place-self: center; }
.field { min-width: 0; width: 100%; height: 36px; border: 1px solid #a9a9a9; background: #fff; }
.field.soft { border-color: #c6c6c6; }
.caption { height: 30px; font-size: 18px; line-height: 30px; text-align: center; }

.flip {
  display: flex;
  align-self: center;
  height: 34px;
  border: 1px solid #cfcfcf;
  border-bottom-color: #bcbcbc;
  border-radius: 7px;
  background: #f3f3f3;
}

.flip button { flex: 1; display: grid; place-items: center; }
.flip button + button { border-left: 2px solid #e2e2e2; }

.style {
  display: grid;
  grid-template-columns: 127px 162px 20px 84px;
  row-gap: 17px;
  align-items: center;
  padding: 17px 19px 18px 14px;
}

.percent { grid-column: 4; }
.slider { appearance: none; width: 100%; height: 24px; }
.slider::-webkit-slider-runnable-track { height: 6px; border-radius: 3px; background: #c9c9c9; }
.slider::-webkit-slider-thumb {
  appearance: none;
  width: 24px;
  height: 24px;
  margin-top: -9px;
  border: 1px solid #cdcdcd;
  border-radius: 50%;
  background: #fbfbfb;
}

.dropdown { grid-column: 2 / 5; display: grid; align-items: center; }
.dropdown > * { grid-area: 1 / 1; }
.dropdown select {
  appearance: none;
  width: 100%;
  height: 40px;
  padding-left: 16px;
  border: 1px solid #cfcfcf;
  border-bottom-color: #bcbcbc;
  border-radius: 7px;
  background: #f3f3f3;
  color: #868686;
}

.arrows { justify-self: end; margin-right: 8px; pointer-events: none; }

.section {
  display: flex;
  align-items: center;
  width: 100%;
  height: 52px;
  padding: 2px 18px 0 14px;
  color: #4f4f4f;
  font-weight: 700;
}

.mini { width: 14px; margin-left: 16px; }

.check {
  appearance: none;
  width: 24px;
  height: 24px;
  margin-left: auto;
  border: 1px solid #bfbfbf;
  border-radius: 6px;
  background: #f2f2f2;
}
```
